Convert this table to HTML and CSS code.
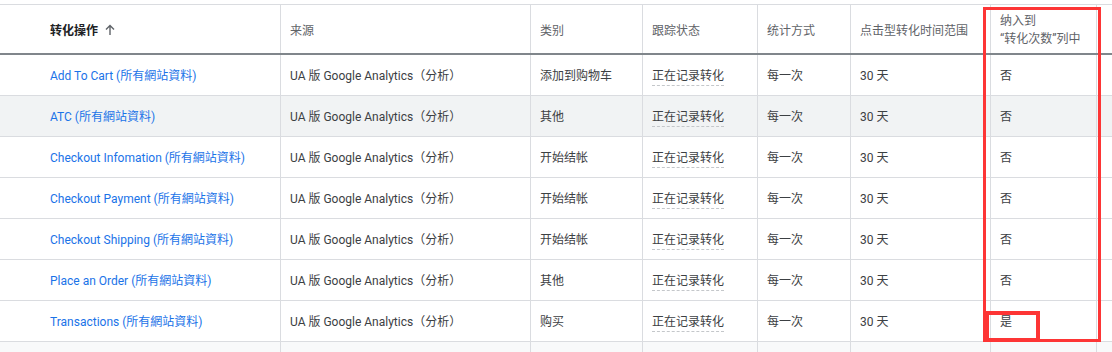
FILE: index.html
```html
<!DOCTYPE html>
<html lang="zh">
<head>
<meta charset="utf-8">
<link rel="stylesheet" href="styles.css">
</head>
<body>
<div class="page">
  <div class="table">
    <div class="row head">
      <div class="cell first"><span class="sort-title">转化操作</span>
        <svg class="sort-icon" width="12" height="12" viewBox="0 0 12 12"><path d="M6 1.5v9.5M2 5.5l4-4 4 4" fill="none" stroke="#5f6368" stroke-width="1.4"/></svg>
      </div>
      <div class="cell">来源</div>
      <div class="cell">类别</div>
      <div class="cell">跟踪状态</div>
      <div class="cell">统计方式</div>
      <div class="cell">点击型转化时间范围</div>
      <div class="cell multi">纳入到<br>“转化次数”列中</div>
      <div class="cell"></div>
    </div>

    <div class="row">
      <div class="cell first"><a class="link">Add To Cart (所有網站資料)</a></div>
      <div class="cell">UA 版 Google Analytics（分析）</div>
      <div class="cell">添加到购物车</div>
      <div class="cell"><span class="status">正在记录转化</span></div>
      <div class="cell">每一次</div>
      <div class="cell">30 天</div>
      <div class="cell">否</div>
      <div class="cell"></div>
    </div>
    <div class="row alt">
      <div class="cell first"><a class="link">ATC (所有網站資料)</a></div>
      <div class="cell">UA 版 Google Analytics（分析）</div>
      <div class="cell">其他</div>
      <div class="cell"><span class="status">正在记录转化</span></div>
      <div class="cell">每一次</div>
      <div class="cell">30 天</div>
      <div class="cell">否</div>
      <div class="cell"></div>
    </div>
    <div class="row">
      <div class="cell first"><a class="link">Checkout Infomation (所有網站資料)</a></div>
      <div class="cell">UA 版 Google Analytics（分析）</div>
      <div class="cell">开始结帐</div>
      <div class="cell"><span class="status">正在记录转化</span></div>
      <div class="cell">每一次</div>
      <div class="cell">30 天</div>
      <div class="cell">否</div>
      <div class="cell"></div>
    </div>
    <div class="row">
      <div class="cell first"><a class="link">Checkout Payment (所有網站資料)</a></div>
      <div class="cell">UA 版 Google Analytics（分析）</div>
      <div class="cell">开始结帐</div>
      <div class="cell"><span class="status">正在记录转化</span></div>
      <div class="cell">每一次</div>
      <div class="cell">30 天</div>
      <div class="cell">否</div>
      <div class="cell"></div>
    </div>
    <div class="row">
      <div class="cell first"><a class="link">Checkout Shipping (所有網站資料)</a></div>
      <div class="cell">UA 版 Google Analytics（分析）</div>
      <div class="cell">开始结帐</div>
      <div class="cell"><span class="status">正在记录转化</span></div>
      <div class="cell">每一次</div>
      <div class="cell">30 天</div>
      <div class="cell">否</div>
      <div class="cell"></div>
    </div>
    <div class="row">
      <div class="cell first"><a class="link">Place an Order (所有網站資料)</a></div>
      <div class="cell">UA 版 Google Analytics（分析）</div>
      <div class="cell">其他</div>
      <div class="cell"><span class="status">正在记录转化</span></div>
      <div class="cell">每一次</div>
      <div class="cell">30 天</div>
      <div class="cell">否</div>
      <div class="cell"></div>
    </div>
    <div class="row">
      <div class="cell first"><a class="link">Transactions (所有網站資料)</a></div>
      <div class="cell">UA 版 Google Analytics（分析）</div>
      <div class="cell">购买</div>
      <div class="cell"><span class="status">正在记录转化</span></div>
      <div class="cell">每一次</div>
      <div class="cell">30 天</div>
      <div class="cell">是</div>
      <div class="cell"></div>
    </div>
    <div class="row tail">
      <div class="cell first"></div>
      <div class="cell"></div>
      <div class="cell"></div>
      <div class="cell"></div>
      <div class="cell"></div>
      <div class="cell"></div>
      <div class="cell"></div>
      <div class="cell"></div>
    </div>
  </div>
  <div class="mark mark-col"></div>
  <div class="mark mark-cell"></div>
</div>
</body>
</html>
```

FILE: styles.css
```css
* { box-sizing: border-box; }
html, body {
  margin: 0;
  padding: 0;
  background: #fff;
  width: 1112px;
  height: 352px;
  overflow: hidden;
}
body {
  font-family: Roboto, "Noto Sans CJK SC", "Noto Sans", sans-serif;
  font-size: 12px;
  color: #3c4043;
}
.page {
  position: relative;
  padding-top: 4px;
  width: 1112px;
  height: 352px;
}
.table {
  width: 1140px;
  border-top: 1px solid #dadce0;
}
.row {
  display: grid;
  grid-template-columns: 281px 250px 112px 115px 93px 140px 106px 43px;
  height: 41px;
  border-bottom: 1px solid #dadce0;
}
.row.alt { background: #f1f3f4; }
.row.tail {
  background: #f8f9fa;
  height: 10px;
  border-bottom: 0;
}
.row.head {
  height: 50px;
  border-bottom: 2px solid #80868b;
  color: #5f6368;
}
.cell {
  display: flex;
  align-items: center;
  padding-left: 9px;
  padding-bottom: 1px;
  border-right: 1px solid #dadce0;
  white-space: nowrap;
  overflow: hidden;
}
.cell.first { padding-left: 50px; }
.head .cell { padding-bottom: 0; padding-top: 1px; }
.sort-title {
  font-weight: 700;
  color: #202124;
}
.sort-icon { margin-left: 6px; }
.cell.multi {
  line-height: 18px;
}
.link {
  color: #1a73e8;
  text-decoration: none;
}
.status {
  display: inline-block;
  padding-bottom: 2px;
  margin-top: 3px;
  border-bottom: 1px dashed #c4c7ca;
}
.mark {
  position: absolute;
  border-style: solid;
  border-color: #fd3535;
}
.mark-col {
  left: 983px;
  top: 7px;
  width: 118px;
  height: 335px;
  border-width: 3px;
}
.mark-cell {
  left: 985px;
  top: 311px;
  width: 55px;
  height: 31px;
  border-width: 4px;
}
```
